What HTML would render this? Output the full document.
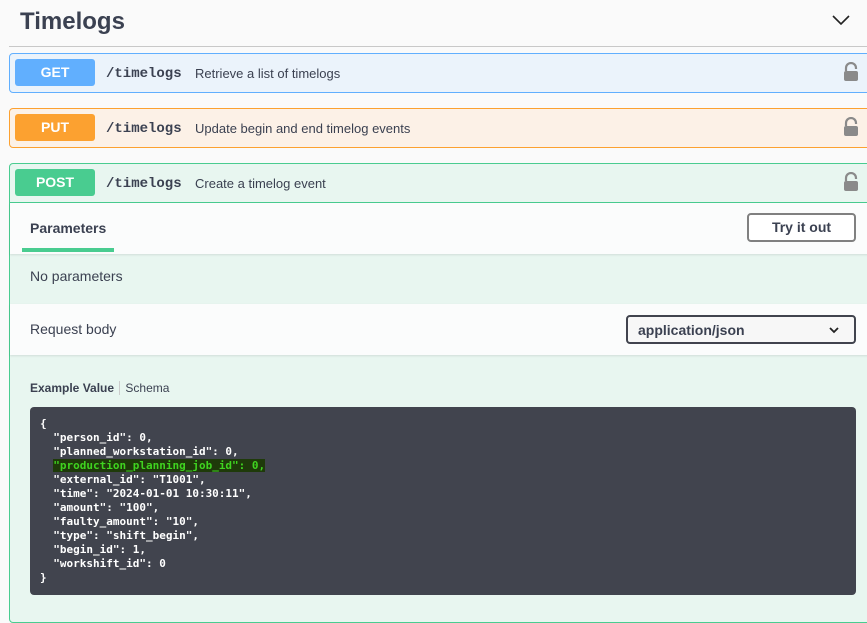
<!DOCTYPE html>
<html><head><meta charset="utf-8"><style>
*{margin:0;padding:0;box-sizing:border-box}
body{width:867px;height:603px;overflow:hidden;background:#fafafa;font-family:"Liberation Sans",sans-serif;color:#3b4151;position:relative}
.abs{position:absolute}
.title{left:20px;top:8px;font-size:24px;font-weight:bold}
.hr{left:9px;top:46px;width:858px;height:1px;background:#c8c8c8}
.op{left:9px;width:870px;height:40px;border:1px solid;border-radius:4px}
.badge{position:absolute;left:5px;top:5px;width:80px;height:27px;border-radius:3px;color:#fff;font-weight:bold;font-size:14px;text-align:center;line-height:27px}
.path{position:absolute;left:96px;top:12px;font-family:"Liberation Mono",monospace;font-weight:bold;font-size:14px;color:#3b4151}
.desc{position:absolute;left:185px;top:12px;font-size:13px;color:#3b4151}
.lock{position:absolute;left:833px;top:8px}
pre{font-family:"DejaVu Sans Mono",monospace;font-weight:bold;font-size:11px;line-height:14px;color:#fff}
</style></head><body>
<div class="abs title">Timelogs</div>
<svg class="abs" style="left:832px;top:14px" width="18" height="12"><path d="M1 2 L9 10 L17 2" fill="none" stroke="#222" stroke-width="1.6"/></svg>
<div class="abs hr"></div>

<div class="abs op" style="top:53px;background:#ebf3fb;border-color:#61affe">
<div class="badge" style="background:#61affe">GET</div><div class="path">/timelogs</div><div class="desc">Retrieve a list of timelogs</div>
<svg class="lock" width="16" height="20"><path d="M3 9 V6 a5 5 0 0 1 10 0 V7" fill="none" stroke="#8a8a8a" stroke-width="2.2"/><rect x="1" y="9" width="14" height="10" rx="2" fill="#8a8a8a"/></svg></div>

<div class="abs op" style="top:108px;background:#fcf1e7;border-color:#fca130">
<div class="badge" style="background:#fca130">PUT</div><div class="path">/timelogs</div><div class="desc">Update begin and end timelog events</div>
<svg class="lock" width="16" height="20"><path d="M3 9 V6 a5 5 0 0 1 10 0 V7" fill="none" stroke="#8a8a8a" stroke-width="2.2"/><rect x="1" y="9" width="14" height="10" rx="2" fill="#8a8a8a"/></svg></div>

<div class="abs" style="left:9px;top:163px;width:870px;height:460px;border:1px solid #49cc90;border-radius:4px;background:#e8f6f0">
<div style="position:relative;height:39px;border-bottom:1px solid #49cc90">
<div class="badge" style="background:#49cc90">POST</div><div class="path">/timelogs</div><div class="desc">Create a timelog event</div>
<svg class="lock" width="16" height="20"><path d="M3 9 V6 a5 5 0 0 1 10 0 V7" fill="none" stroke="#8a8a8a" stroke-width="2.2"/><rect x="1" y="9" width="14" height="10" rx="2" fill="#8a8a8a"/></svg></div>
<div style="position:relative;height:51px;background:#fbfcfc;box-shadow:0 1px 2px rgba(0,0,0,.1)">
<div class="abs" style="left:20px;top:17px;font-size:14px;font-weight:bold">Parameters</div>
<div class="abs" style="left:12px;top:45px;width:92px;height:4px;background:#49cc90"></div>
<div class="abs" style="left:737px;top:10px;width:109px;height:29px;border:2px solid #808080;border-radius:4px;font-size:14px;font-weight:bold;text-align:center;line-height:25px;background:#fff">Try it out</div>
</div>
<div style="position:relative;height:50px"><div class="abs" style="left:20px;top:14px;font-size:14px">No parameters</div></div>
<div style="position:relative;height:51px;background:#fbfcfc;box-shadow:0 1px 2px rgba(0,0,0,.1)">
<div class="abs" style="left:20px;top:17px;font-size:14px">Request body</div>
<div class="abs" style="left:616px;top:11px;width:230px;height:29px;border:2px solid #41444e;border-radius:4px;background:#f7f7f7;font-size:14px;font-weight:bold;padding:5px 10px">application/json
<svg class="abs" style="left:201px;top:10px" width="10" height="7"><path d="M1 1 L5 5 L9 1" fill="none" stroke="#222" stroke-width="1.8"/></svg></div>
</div>
<div class="abs" style="left:20px;top:217px;font-size:12px"><b>Example Value</b> <span style="border-left:1px solid #ccc;margin-left:2px;padding-left:5px">Schema</span></div>
<div class="abs" style="left:20px;top:243px;width:826px;height:188px;background:#41444e;border-radius:4px;padding:10px 10px">
<pre>{
  "person_id": 0,
  "planned_workstation_id": 0,
  <span style="background:#1e3a0a;color:#3fd320">"production_planning_job_id": 0,</span>
  "external_id": "T1001",
  "time": "2024-01-01 10:30:11",
  "amount": "100",
  "faulty_amount": "10",
  "type": "shift_begin",
  "begin_id": 1,
  "workshift_id": 0
}</pre></div>
</div>
</body></html>
